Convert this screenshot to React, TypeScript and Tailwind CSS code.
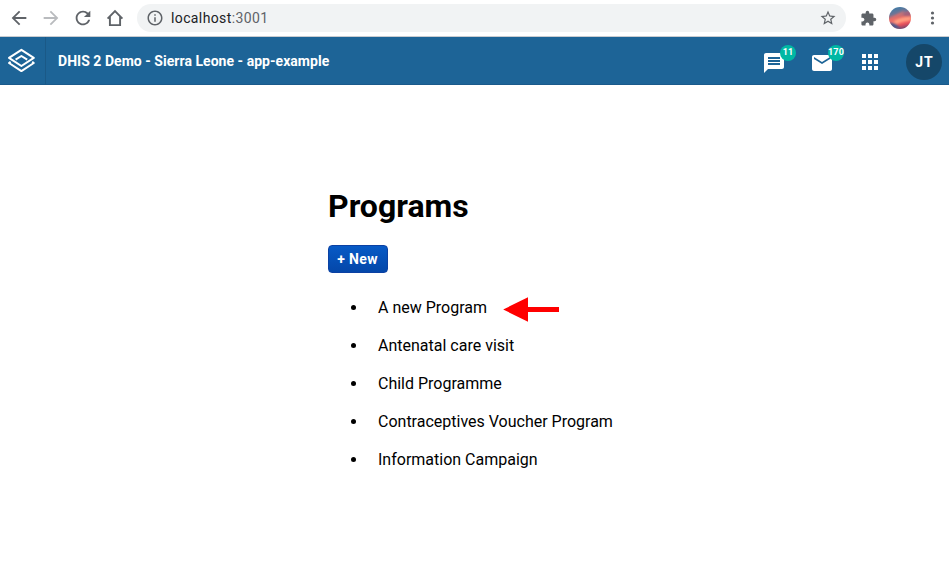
import React from 'react';
import {
  MdApps,
  MdArrowBack,
  MdArrowForward,
  MdEmail,
  MdExtension,
  MdInfoOutline,
  MdMessage,
  MdRefresh,
  MdStarBorder,
} from 'react-icons/md';

const programs: string[] = [
  'A new Program',
  'Antenatal care visit',
  'Child Programme',
  'Contraceptives Voucher Program',
  'Information Campaign',
];

function ProfilePicture() {
  return (
    <svg width="22" height="22" viewBox="0 0 22 22">
      <defs>
        <clipPath id="round">
          <circle cx="11" cy="11" r="11" />
        </clipPath>
        <linearGradient id="sky" x1="0.35" y1="0" x2="0.6" y2="1">
          <stop offset="0" stopColor="#3f7ba6" />
          <stop offset="0.27" stopColor="#6d7596" />
          <stop offset="0.47" stopColor="#dd6a68" />
          <stop offset="0.65" stopColor="#ff7c6c" />
          <stop offset="0.82" stopColor="#e04f5c" />
          <stop offset="1" stopColor="#70466e" />
        </linearGradient>
        <filter id="soft">
          <feGaussianBlur stdDeviation="0.9" />
        </filter>
      </defs>
      <g clipPath="url(#round)">
        <rect width="22" height="22" fill="url(#sky)" />
        <g filter="url(#soft)">
          <path d="M0 12 Q5 9 10 6 L16 3 L13 8 L6 12 L0 15Z" fill="#f0706a" opacity="0.6" />
          <path d="M5 14 Q12 10 22 10 L21 13 Q12 14 7 17Z" fill="#ffa081" />
          <path d="M14 7 L22 3 V9 L16 9Z" fill="#a0607c" />
          <path d="M0 15 L7 17 L12 22 H0Z" fill="#4f5a8a" />
        </g>
      </g>
    </svg>
  );
}

function BrowserBar() {
  return (
    <div className="flex h-[37px] items-center border-b border-[#c9ccd0] bg-white pl-2 text-[#5f6368]">
      <MdArrowBack className="size-[22px]" />
      <MdArrowForward className="ml-[10px] size-[22px] text-[#b9bbbe]" />
      <MdRefresh className="ml-[10px] size-[22px]" />
      <svg className="ml-[10px]" width="22" height="22" viewBox="0 0 22 22" fill="none" stroke="currentColor" strokeWidth="1.9">
        <path d="M3.6 11.6 11 4l7.4 7.6M5.9 9.8v8.3h10.2V9.8" />
      </svg>
      <div className="ml-[11px] flex h-7 w-[709px] items-center rounded-full bg-[#f1f3f4] pr-[9px] pl-[9px]">
        <MdInfoOutline className="size-[18px]" />
        <span className="ml-[7px] text-[14px] tracking-[0.38px] text-[#202124]">
          localhost<span className="text-[#5f6368]">:3001</span>
        </span>
        <MdStarBorder className="ml-auto size-[18px]" />
      </div>
      <MdExtension className="ml-[14px] size-[17px]" />
      <div className="ml-[12px]">
        <ProfilePicture />
      </div>
      <svg className="ml-[11px]" width="20" height="20" viewBox="0 0 20 20" fill="currentColor">
        <circle cx="10.5" cy="5" r="1.6" />
        <circle cx="10.5" cy="10" r="1.6" />
        <circle cx="10.5" cy="15" r="1.6" />
      </svg>
    </div>
  );
}

function Badge({ count }: { count: string }) {
  return (
    <span className="absolute -top-[6px] left-[18px] flex size-4 items-center justify-center rounded-full bg-[#00b8a4] text-[9px] font-bold tracking-[0.2px]">
      {count}
    </span>
  );
}

function HeaderBar() {
  return (
    <header className="flex h-12 items-center bg-[#1d6497] text-white shadow-[inset_0_-1px_0_#1a5a8b]">
      <div className="flex h-full w-[46px] items-center border-r border-[#1a5987] pl-[7px]">
        <svg width="29" height="28" viewBox="0 0 29 28" fill="none" stroke="white" strokeWidth="2" strokeLinejoin="round">
          <path d="M14.4 2.8 L26.8 10.9 L14.4 19 L2 10.9Z" />
          <path d="M20.2 12.7 L14.4 9 L8.6 12.7" />
          <path d="M3.6 14.8 L2 16 L14.4 24.1 L26.8 16 L25.2 14.8" />
        </svg>
      </div>
      <div className="ml-3 pt-px text-[14px] font-bold tracking-[0.035px]">DHIS 2 Demo - Sierra Leone - app-example</div>
      <div className="ml-auto flex items-center pt-[2px]">
        <div className="relative mt-[2px]">
          <MdMessage className="size-6" />
          <Badge count="11" />
        </div>
        <div className="relative mt-[2px] ml-6">
          <MdEmail className="size-6" />
          <Badge count="170" />
        </div>
        <MdApps className="ml-6 size-6" />
        <div className="mr-[7px] ml-6 flex size-9 items-center justify-center rounded-full bg-[#154769] pl-px text-[14px] font-bold tracking-[1px]">
          JT
        </div>
      </div>
    </header>
  );
}

function Arrow() {
  return (
    <svg className="-mt-px ml-4" width="57" height="26" viewBox="0 0 57 26" fill="#ff0000">
      <path d="M0.2 12.5 L25 0.2 V10.1 H56 V15 H25 V24.8Z" />
    </svg>
  );
}

export default function App() {
  return (
    <div className="h-[569px] overflow-hidden bg-white font-[Roboto,sans-serif] text-black">
      <BrowserBar />
      <HeaderBar />
      <main className="ml-[328px] pt-[102px]">
        <h1 className="text-[32px] leading-[38px] font-bold">Programs</h1>
        <button className="mt-5 flex h-7 w-[60px] items-center justify-center rounded-[4px] border border-[#0b41a3] bg-linear-to-b from-[#075ac6] to-[#0447a9] pr-px text-[14px] font-bold tracking-[0.35px] whitespace-nowrap text-white">
          + New
        </button>
        <ul className="mt-[25px]">
          {programs.map((name, i) => (
            <li key={name} className="flex h-[38px] items-start text-[16px] leading-[19px]">
              <span className="mt-[7px] ml-[23px] size-[5px] rounded-full bg-black" />
              <span className="ml-[22px]">{name}</span>
              {i === 0 && <Arrow />}
            </li>
          ))}
        </ul>
      </main>
    </div>
  );
}
